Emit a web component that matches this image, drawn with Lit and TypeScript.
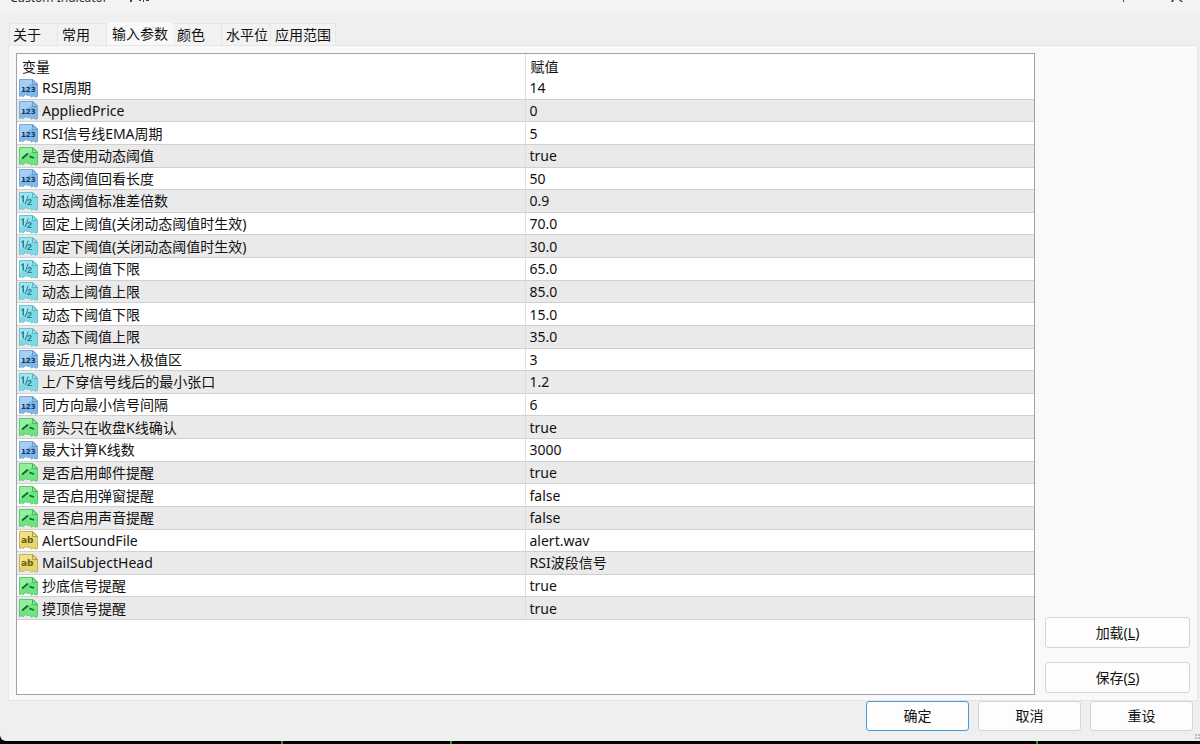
import { LitElement, html, css, svg } from "lit";
import { customElement, property, state } from "lit/decorators.js";

type Kind = "int" | "bool" | "real" | "text";
interface Param { kind: Kind; name: string; value: string; }

const PARAMS: Param[] = [
  { kind: "int", name: "RSI周期", value: "14" },
  { kind: "int", name: "AppliedPrice", value: "0" },
  { kind: "int", name: "RSI信号线EMA周期", value: "5" },
  { kind: "bool", name: "是否使用动态阈值", value: "true" },
  { kind: "int", name: "动态阈值回看长度", value: "50" },
  { kind: "real", name: "动态阈值标准差倍数", value: "0.9" },
  { kind: "real", name: "固定上阈值(关闭动态阈值时生效)", value: "70.0" },
  { kind: "real", name: "固定下阈值(关闭动态阈值时生效)", value: "30.0" },
  { kind: "real", name: "动态上阈值下限", value: "65.0" },
  { kind: "real", name: "动态上阈值上限", value: "85.0" },
  { kind: "real", name: "动态下阈值下限", value: "15.0" },
  { kind: "real", name: "动态下阈值上限", value: "35.0" },
  { kind: "int", name: "最近几根内进入极值区", value: "3" },
  { kind: "real", name: "上/下穿信号线后的最小张口", value: "1.2" },
  { kind: "int", name: "同方向最小信号间隔", value: "6" },
  { kind: "bool", name: "箭头只在收盘K线确认", value: "true" },
  { kind: "int", name: "最大计算K线数", value: "3000" },
  { kind: "bool", name: "是否启用邮件提醒", value: "true" },
  { kind: "bool", name: "是否启用弹窗提醒", value: "false" },
  { kind: "bool", name: "是否启用声音提醒", value: "false" },
  { kind: "text", name: "AlertSoundFile", value: "alert.wav" },
  { kind: "text", name: "MailSubjectHead", value: "RSI波段信号" },
  { kind: "bool", name: "抄底信号提醒", value: "true" },
  { kind: "bool", name: "摸顶信号提醒", value: "true" },
];

const TABS = ["关于", "常用", "输入参数", "颜色", "水平位", "应用范围"];

@customElement("param-icon")
class ParamIcon extends LitElement {
  @property() kind: Kind = "int";

  static styles = css`
    :host { display: block; width: 19px; height: 19px; flex: none; }
    svg { display: block; width: 19px; height: 19px; }
    text { font-family: "DejaVu Sans", sans-serif; font-weight: 700; }
    .page { stroke-width: 1; stroke-linejoin: round; }
    .int .page { fill: #82b8e8; stroke: #78a8d8; }
    .int .shine { fill: #a6cff3; }
    .int .fold { fill: #9fc9ef; stroke: #6798cb; }
    .int text { fill: #10375c; font-size: 7px; }
    .real .page { fill: #80d8e5; stroke: #6cc3d1; }
    .real .shine { fill: #a0e6ef; }
    .real .fold { fill: #a0e6ef; stroke: #58b4c2; }
    .real text { fill: #2a7d8d; font-size: 9px; font-family: "Liberation Sans", sans-serif; }
    .real .mark { stroke: #2a7d8d; stroke-width: 1; fill: none; }
    .real .one { stroke-width: 1.5; }
    .bool .page { fill: #70e283; stroke: #58cb6d; }
    .bool .shine { fill: #92f09f; }
    .bool .fold { fill: #92f09f; stroke: #45b65b; }
    .bool .mark { stroke: #0e6b27; stroke-width: 1.8; fill: none; }
    .text .page { fill: #e4d56c; stroke: #c5b353; }
    .text .shine { fill: #efe287; }
    .text .fold { fill: #efe287; stroke: #ad9b42; }
    .text text { fill: #6c5c0e; font-size: 9px; }
  `;

  private glyph() {
    switch (this.kind) {
      case "int": return svg`<text x="2" y="13">123</text>`;
      case "real": return svg`<path class="mark one" d="M2.5 5.2L4.2 4.2V10.5"></path><path class="mark" d="M9.2 3.5L6.2 12"></path><text x="8" y="12.5">2</text>`;
      case "bool": return svg`<path class="mark" d="M3 11.5L9 6.5M10.5 9.5L15 11"></path>`;
      default: return svg`<text x="2" y="12">ab</text>`;
    }
  }

  render() {
    return html`<svg class=${this.kind} viewBox="0 0 19 19" aria-hidden="true">
      <path class="page" d="M.5 .5H14L18.5 5V17.5L16.5 18.2L14.5 16.8L12.5 18.2L10.5 16L8.5 16.5L6.5 15.5L4.5 17.5L2.5 16.8L.5 17.5Z"></path>
      <path class="shine" d="M1 1H13V4L1 13Z"></path>
      <path class="fold" d="M13.5 1V5.5H18Z"></path>
      ${this.glyph()}
    </svg>`;
  }
}

@customElement("app-root")
class AppRoot extends LitElement {
  @state() private tab = 2;

  static styles = css`
    :host {
      display: block;
      height: 100vh;
      overflow: hidden;
      background: #000;
      color: #111;
      font: 14px/20px "Noto Sans", "Noto Sans CJK SC", sans-serif;
    }
    * { box-sizing: border-box; }
    button { font: inherit; color: inherit; }
    .desk { display: flex; flex-direction: column; height: 100%; }
    .window {
      flex: 1;
      min-height: 0;
      display: flex;
      flex-direction: column;
      position: relative;
      background: #efefef;
      border-radius: 0 0 0 6px;
      overflow: hidden;
    }
    .caption {
      flex: none;
      height: 13px;
      display: flex;
      gap: 20px;
      align-items: flex-end;
      padding: 0 16px 5px 10px;
      background: #f3f3f3;
      color: #333;
      font-size: 12px;
      overflow: hidden;
    }
    .title { white-space: nowrap; }
    .caption svg { display: block; flex: none; height: 8px; fill: #444; }
    .controls { margin-left: auto; }
    .tabs { flex: none; display: flex; align-items: flex-end; height: 32px; padding: 0 9px; }
    .tab {
      height: 22px;
      padding: 0 4px;
      border: 1px solid #e5e5e5;
      border-left-width: 0;
      border-bottom: 0;
      background: #f2f2f2;
      text-align: left;
      white-space: nowrap;
      line-height: 20px;
    }
    .tab:first-child { border-left-width: 1px; padding-left: 3px; }
    .short { width: 49px; }
    .tab[aria-selected="true"] {
      height: 23px;
      padding-left: 5px;
      background: #f9f9f9;
      border-color: #f9f9f9;
    }
    .sheet {
      flex: 1;
      min-height: 0;
      display: flex;
      gap: 10px;
      margin: 0 2px 0 8px;
      padding: 7px 7px 5px;
      background: #f9f9f9;
      border: 1px solid #e6e6e6;
    }
    .list { flex: 1; min-width: 0; border: 1px solid #a0a3aa; background: #fff; }
    table { width: 100%; height: 566px; border-collapse: separate; border-spacing: 0; table-layout: fixed; }
    th, td { height: 22px; padding: 1px 4px 0; font-weight: 400; text-align: left; white-space: nowrap; line-height: 20px; vertical-align: middle; }
    th { padding: 3px 5px 0; }
    td { border-bottom: 1px solid #d0d0d0; }
    .row:nth-child(even) { background: #eaeaea; }
    .first { width: 50%; border-right: 1px solid #dedede; }
    td.first { padding-left: 2px; }
    .cell { display: flex; align-items: center; gap: 4px; height: 20px; }
    .side { flex: none; width: 145px; display: flex; flex-direction: column; justify-content: flex-end; gap: 14px; padding-bottom: 2px; }
    .btn {
      height: 31px;
      padding: 0;
      border: 1px solid #d5d5d5;
      border-radius: 3px;
      background: #fdfdfd;
      text-align: center;
    }
    .footer { flex: none; display: flex; justify-content: flex-end; gap: 9px; padding: 0 7px 10px; }
    .footer .btn { width: 103px; height: 30px; }
    .footer .primary { border-color: #459bdc; }
    .grip { position: absolute; right: 0; bottom: 0; width: 5px; height: 7px; fill: #bcbcbc; }
    .chart { flex: none; height: 3px; display: flex; }
    .tick { width: 2px; background: #17a51c; }
    .s1 { flex: 281; } .s2 { flex: 167; } .s3 { flex: 584; } .s4 { flex: 162; }
  `;

  render() {
    return html`<div class="desk">
      <main class="window">
        <header class="caption">
          <span class="title">Custom Indicator</span>
          <svg width="22" viewBox="0 0 22 8" aria-hidden="true"><path d="M2 0H4V2H2ZM11 0H13V1H11ZM15 0H16V2H15ZM18 0H21V1H18Z"></path></svg>
          <svg class="controls" width="62" viewBox="0 0 62 8" aria-hidden="true"><path d="M1 0H2V2H1ZM50 0H52L51 2H49ZM57 0H59L61 2H59Z"></path></svg>
        </header>
        <div class="tabs" role="tablist">
          ${TABS.map((t, i) => html`<button class="tab ${[0, 1, 3, 4].includes(i) ? "short" : ""}" role="tab"
            aria-selected=${i === this.tab ? "true" : "false"} @click=${() => (this.tab = i)}>${t}</button>`)}
        </div>
        <section class="sheet" role="tabpanel">
          <div class="list">
            <table>
              <thead><tr><th class="first">变量</th><th>赋值</th></tr></thead>
              <tbody>${PARAMS.map((p) => html`<tr class="row">
                <td class="first"><div class="cell"><param-icon .kind=${p.kind}></param-icon><span>${p.name}</span></div></td>
                <td>${p.value}</td></tr>`)}</tbody>
            </table>
          </div>
          <div class="side">
            <button class="btn">加载(<u>L</u>)</button>
            <button class="btn">保存(<u>S</u>)</button>
          </div>
        </section>
        <footer class="footer">
          <button class="btn primary">确定</button>
          <button class="btn">取消</button>
          <button class="btn">重设</button>
        </footer>
        <svg class="grip" viewBox="0 0 5 7" aria-hidden="true"><path d="M0 0H2V2H0ZM3 0H5V2H3ZM3 3H5V5H3ZM0 3H2V5H0Z"></path></svg>
      </main>
      <div class="chart"><i class="s1"></i><i class="tick"></i><i class="s2"></i><i class="tick"></i><i class="s3"></i><i class="tick"></i><i class="s4"></i></div>
    </div>`;
  }
}
